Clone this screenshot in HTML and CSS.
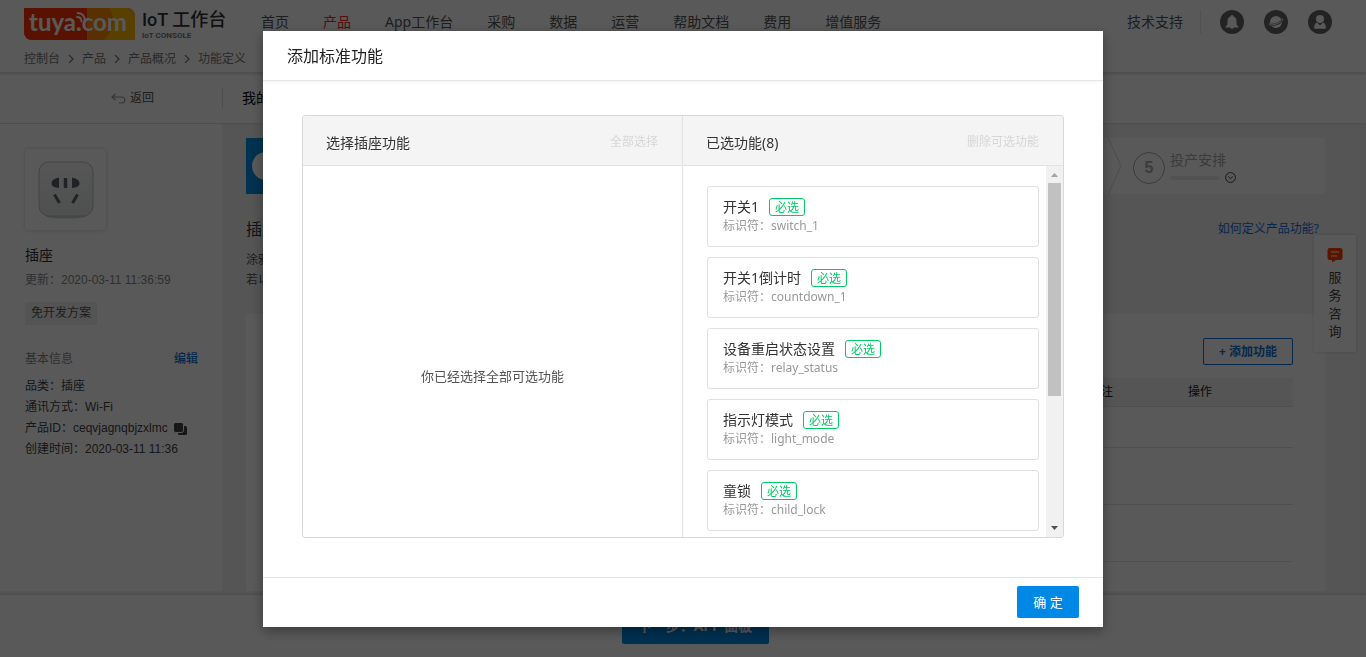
FILE: index.html
```html
<!DOCTYPE html>
<html lang="zh-CN">
<head>
<meta charset="utf-8">
<title>IoT 工作台</title>
<link rel="stylesheet" href="styles.css">
</head>
<body>
<div class="app">
  <header class="topbar">
    <div class="topbar-row">
      <a class="brand" href="#">
        <svg class="brand-logo" width="111" height="32" viewBox="0 0 111 32" role="img" aria-label="tuya.com">
          <defs><clipPath id="plate"><path d="M0 0H102Q111 0 111 9V32H9Q0 32 0 23Z"/></clipPath></defs>
          <g clip-path="url(#plate)">
            <rect width="111" height="32" fill="#ff3600"/>
            <rect x="63" width="48" height="32" fill="#ffb400"/>
            <circle cx="66" cy="13" r="23" fill="#ff8a00"/>
            <rect width="63" height="32" fill="#ff3600"/>
          </g>
          <text class="brand-word" x="5" y="23">tuya.com</text>
          <path d="M53 9Q57.500 9 57.500 13.500M53.500 5Q61 5.500 61 13" fill="none" stroke="#fff" stroke-width="1.800" stroke-linecap="round"/>
        </svg>
        <span class="brand-text"><strong>IoT 工作台</strong><small>IoT CONSOLE</small></span>
      </a>
      <nav class="nav">
        <a href="#">首页</a><a class="active" href="#">产品</a><a href="#">App工作台</a><a href="#">采购</a><a href="#">数据</a><a href="#">运营</a><a href="#">帮助文档</a><a href="#">费用</a><a href="#">增值服务</a>
      </nav>
      <div class="tools">
        <a class="support" href="#">技术支持</a>
        <button class="round" aria-label="通知"><svg width="24" height="24" viewBox="0 0 24 24"><circle cx="12" cy="12" r="12" fill="#666"/><path d="M12 5q1 0 1.200 1.200q3.300.8 3.300 5.200v3.200l2 2.200v.7h-4.700q-.4 1.200-1.800 1.200t-1.800-1.200H5.500v-.7l2-2.200v-3.200q0-4.400 3.300-5.200Q11 5 12 5z" fill="#fff"/></svg></button>
        <button class="round" aria-label="语言"><svg width="24" height="24" viewBox="0 0 24 24"><circle cx="12" cy="12" r="12" fill="#666"/><circle cx="12" cy="12" r="6" fill="#fff"/><path d="M5.500 13Q4 15.500 8 15Q14 14.500 17.500 11Q19.500 9 18 8.500" fill="none" stroke="#666" stroke-width="2.400"/><path d="M6.500 12.500Q3.500 15.500 8 15Q13 14.500 17.500 11.200Q20 9 17.500 9.300" fill="none" stroke="#fff" stroke-width="1"/></svg></button>
        <button class="round" aria-label="账户"><svg width="24" height="24" viewBox="0 0 24 24"><circle cx="12" cy="12" r="12" fill="#666"/><circle cx="12" cy="9" r="4" fill="#fff"/><path d="M6 19v-2.500q0-3.500 3.200-4.200L12 15.200l2.800-2.900q3.200.7 3.200 4.200V19z" fill="#fff" stroke="#666" stroke-width=".6"/></svg></button>
      </div>
    </div>
    <nav class="crumbs" aria-label="路径">
      <a href="#">控制台</a>
      <svg width="6" height="8" viewBox="0 0 6 8"><path d="M1 0l4 4-4 4"/></svg>
      <a href="#">产品</a>
      <svg width="6" height="8" viewBox="0 0 6 8"><path d="M1 0l4 4-4 4"/></svg>
      <a href="#">产品概况</a>
      <svg width="6" height="8" viewBox="0 0 6 8"><path d="M1 0l4 4-4 4"/></svg>
      <span>功能定义</span>
    </nav>
  </header>

  <div class="subbar">
    <a class="back" href="#"><svg width="15" height="11" viewBox="0 0 15 11"><path d="M4.500 1L1 4l3.500 3M1.500 4h9q3.300 0 3.300 3t-3.300 3H8" fill="none" stroke="#999" stroke-width="1.200"/></svg>返回</a>
    <h1 class="product-name">我的产品</h1>
  </div>

  <div class="content">
    <aside class="side">
      <div class="thumb">
        <svg width="56" height="58" viewBox="0 0 56 58">
          <defs><linearGradient id="shell" x1="0" y1="0" x2="0" y2="1"><stop offset="0" stop-color="#f8f8f8"/><stop offset="1" stop-color="#e2e4e5"/></linearGradient></defs>
          <ellipse cx="28" cy="55.500" rx="20" ry="2" fill="#d0d0d0"/>
          <rect x="1" y="1" width="54" height="54" rx="10" fill="url(#shell)" stroke="#bcc2c6"/>
          <path d="M13.500 22q0-2.500 3-4t4.500-1.500V27q-1.500 0-4.500-1T13.500 22zM41.500 22q0-2.500-3-4T34 16.500V27q1.500 0 4.500-1t3-4z" fill="#59666d"/>
          <path d="M27.500 17v10" stroke="#59666d" stroke-width="3.500"/>
          <path d="M16.500 33.500l5 8.500M39.500 33.500l-5 8.500" stroke="#59666d" stroke-width="3"/>
        </svg>
      </div>
      <h2 class="side-name">插座</h2>
      <p class="side-date">更新：2020-03-11 11:36:59</p>
      <span class="plan">免开发方案</span>
      <div class="side-head"><span>基本信息</span><a href="#">编辑</a></div>
      <ul class="facts">
        <li>品类：插座</li>
        <li>通讯方式：Wi-Fi</li>
        <li>产品ID：ceqvjagnqbjzxlmc<button class="copy" aria-label="复制"><svg width="13" height="12" viewBox="0 0 13 12"><rect x="4" y="3" width="9" height="9" rx="1.500" fill="#444"/><rect x="-.5" y="-.5" width="10" height="10" rx="2" fill="#444" stroke="#fff"/></svg></button></li>
        <li>创建时间：2020-03-11 11:36</li>
      </ul>
    </aside>

    <main class="main">
      <div class="steps">
        <div class="step-first"><span class="step-dot"></span></div>
        <svg class="step-arrow" width="14" height="56" viewBox="0 0 14 56"><path d="M0 0L13 28L0 56" fill="none" stroke="#e6e6e6" stroke-width="1.500"/></svg>
        <div class="step-last">
          <span class="step-num">5</span>
          <div>
            <div class="step-title">投产安排</div>
            <div class="step-track"><span class="bar"></span><svg width="11" height="11" viewBox="0 0 11 11"><circle cx="5.500" cy="5.500" r="4.900" fill="none" stroke="#444"/><path d="M3.200 4.500l2.300 2.200 2.300-2.200" fill="none" stroke="#444"/></svg></div>
          </div>
        </div>
      </div>
      <div class="intro">
        <h2>插座</h2>
        <a href="#">如何定义产品功能?</a>
      </div>
      <p class="desc">涂鸦</p>
      <p class="desc">若以</p>
      <section class="panel">
        <div class="panel-tools"><button class="add">+ 添加功能</button></div>
        <table class="grid">
          <thead><tr><th class="note">备注</th><th>操作</th></tr></thead>
          <tbody>
            <tr class="short"><td></td><td></td></tr>
            <tr><td></td><td></td></tr>
            <tr><td></td><td></td></tr>
          </tbody>
        </table>
      </section>
    </main>
  </div>

  <footer class="foot"><button class="next">下一步：APP 面板</button></footer>

  <button class="service">
    <svg width="16" height="16" viewBox="0 0 16 16"><path d="M3 1h10q2.500 0 2.500 2.500v7q0 2.500-2.500 2.500H9l-4 2.500V13H3Q.5 13 .5 10.500v-7Q.5 1 3 1z" fill="#ff3c00"/><path d="M4 5h8M4 9h6" stroke="#fff" stroke-width="1.200"/></svg>
    <span>服</span><span>务</span><span>咨</span><span>询</span>
  </button>
</div>

<div class="mask">
  <div class="modal" role="dialog" aria-labelledby="dialog-title">
    <h2 class="modal-head" id="dialog-title">添加标准功能</h2>
    <div class="modal-body">
      <div class="transfer">
        <section class="pane">
          <div class="pane-head"><h3>选择插座功能</h3><button class="pane-action" disabled>全部选择</button></div>
          <div class="empty">你已经选择全部可选功能</div>
        </section>
        <section class="pane">
          <div class="pane-head"><h3>已选功能(8)</h3><button class="pane-action" disabled>删除可选功能</button></div>
          <div class="scroller">
            <ul class="list">
              <li><div class="fn"><span>开关1</span><em>必选</em></div><p>标识符：switch_1</p></li>
              <li><div class="fn"><span>开关1倒计时</span><em>必选</em></div><p>标识符：countdown_1</p></li>
              <li><div class="fn"><span>设备重启状态设置</span><em>必选</em></div><p>标识符：relay_status</p></li>
              <li><div class="fn"><span>指示灯模式</span><em>必选</em></div><p>标识符：light_mode</p></li>
              <li><div class="fn"><span>童锁</span><em>必选</em></div><p>标识符：child_lock</p></li>
            </ul>
            <div class="track">
              <svg width="17" height="17" viewBox="0 0 17 17"><path d="M5 11h7L8.500 7z" fill="#a3a3a3"/></svg>
              <div class="grip"></div>
              <svg width="17" height="17" viewBox="0 0 17 17"><path d="M5 6h7L8.500 10z" fill="#505050"/></svg>
            </div>
          </div>
        </section>
      </div>
    </div>
    <div class="modal-foot"><button class="ok">确 定</button></div>
  </div>
</div>
</body>
</html>
```
FILE: styles.css
```css
* { box-sizing: border-box; margin: 0; padding: 0; }
body {
  font-family: "Noto Sans", "Noto Sans CJK SC", sans-serif;
  font-size: 14px;
  line-height: 20px;
  color: #333;
}
a { color: inherit; text-decoration: none; }
button { font: inherit; color: inherit; border: 0; background: none; }
ul { list-style: none; }
svg { display: block; flex: none; }
h1, h2, h3 { font-weight: 400; }

.app {
  position: relative;
  display: flex;
  flex-direction: column;
  height: 100vh;
  overflow: hidden;
  background: #f3f3f3;
}

.topbar {
  flex: none;
  height: 72px;
  padding: 8px 34px 0 24px;
  background: #fff;
  box-shadow: 0 1px 3px rgba(0, 0, 0, .12);
}
.topbar-row { display: flex; height: 32px; }
.brand { display: flex; gap: 7px; width: 237px; }
.brand-logo { overflow: visible; }
.brand-word { font: 700 24px Lato, sans-serif; fill: #fff; }
.brand-text { display: flex; flex-direction: column; }
.brand-text strong { font-family: Roboto, "Noto Sans CJK SC", sans-serif; font-size: 18px; font-weight: 500; line-height: 23px; }
.brand-text small { font: 700 8px/9px Roboto, sans-serif; color: #777; }
.nav { display: flex; gap: 34px; padding-top: 4px; color: #555; white-space: nowrap; }
.nav .active { color: #f02323; }
.tools { display: flex; gap: 20px; margin-left: auto; padding-top: 2px; }
.support { height: 24px; padding: 2px 17px 0 0; color: #555; border-right: 1px solid #e6e6e6; margin-right: -1px; }
.round { width: 24px; height: 24px; }
.crumbs {
  display: flex;
  align-items: center;
  gap: 8px;
  margin-top: 9px;
  font-size: 12px;
  color: #777;
}
.crumbs svg path { fill: none; stroke: #777; stroke-width: 1.2; }

.subbar {
  display: flex;
  align-items: center;
  flex: none;
  height: 48px;
  margin-top: 3px;
  padding-bottom: 2px;
  background: #fff;
  box-shadow: 0 1px 2px rgba(0, 0, 0, .1);
}
.back {
  display: flex;
  align-items: center;
  gap: 4px;
  width: 223px;
  padding-left: 111px;
  font-size: 12px;
  color: #555;
  border-right: 1px solid #ddd;
}
.product-name { padding-left: 19px; font-size: 14px; color: #000; }

.content { display: flex; flex: 1; min-height: 0; }
.side {
  width: 222px;
  padding: 25px 24px 0 25px;
  background: #fff;
  font-family: "Liberation Sans", "Noto Sans CJK SC", sans-serif;
  font-size: 12px;
  margin-top: 1px;
}
.thumb {
  display: grid;
  place-items: center;
  width: 81px;
  height: 81px;
  border-radius: 4px;
  box-shadow: 0 0 4px rgba(0, 0, 0, .2);
}
.side-name { margin-top: 15px; font-size: 14px; line-height: 20px; }
.side-date { margin-top: 5px; line-height: 20px; color: #888; }
.plan {
  display: inline-block;
  margin-top: 12px;
  padding: 0 6px;
  line-height: 23px;
  color: #555;
  background: #f0f0f0;
  border-radius: 2px;
}
.side-head { display: flex; justify-content: space-between; margin-top: 24px; color: #888; }
.side-head a { color: #0f6fd6; font-weight: 500; }
.facts { margin-top: 7px; line-height: 21px; color: #444; }
.facts li { display: flex; align-items: center; gap: 6px; height: 21px; }
.copy { width: 13px; height: 12px; }

.main { display: flex; flex-direction: column; flex: 1; padding: 15px 41px 0 24px; }
.steps { display: flex; flex: none; height: 56px; background: #fff; }
.step-first { width: 200px; padding: 14px 6px; background: #0090e7; }
.step-dot { display: block; width: 28px; height: 28px; border-radius: 50%; background: #fff; }
.step-arrow { margin-left: auto; }
.step-last { display: flex; gap: 5px; width: 203px; padding: 14px 0 0 11px; color: #aaa; }
.step-num {
  width: 32px;
  height: 32px;
  border: 1px solid #aaa;
  border-radius: 50%;
  font: 700 16px/30px "Liberation Sans", sans-serif;
  text-align: center;
}
.step-title { line-height: 16px; }
.step-track { display: flex; align-items: center; gap: 5px; margin-top: 4px; }
.bar { width: 50px; height: 4px; border-radius: 2px; background: #eaeaea; }
.intro { display: flex; justify-content: space-between; margin: 24px 6px 10px 0; line-height: 22px; }
.intro h2 { font-size: 16px; }
.intro a { font-size: 12px; color: #0f6fd6; }
.desc { font-size: 12px; line-height: 20px; color: #555; }
.panel { flex: 1; min-height: 0; margin-top: 24px; padding: 24px 32px 0; overflow: hidden; background: #fff; }
.panel-tools { display: flex; justify-content: flex-end; }
.add {
  width: 90px;
  height: 27px;
  border: 1px solid #0f6fd6;
  border-radius: 2px;
  font-size: 12px;
  font-weight: 700;
  color: #0f6fd6;
}
.grid { width: 100%; margin-top: 13px; border-collapse: collapse; font-size: 12px; table-layout: fixed; }
.grid th { height: 28px; font-weight: 400; text-align: left; background: #f2f2f2; color: #222; }
.grid th:last-child { width: 105px; }
.grid .note { text-align: right; padding-right: 75px; }
.grid tr { height: 57px; border-bottom: 1px solid #e2e2e2; }
.grid thead tr { height: 28px; }
.grid .short { height: 41px; }

.foot {
  display: flex;
  justify-content: center;
  align-items: flex-start;
  flex: none;
  height: 62px;
  margin-top: 4px;
  padding: 13px 0 0 24px;
  background: #fff;
  box-shadow: 0 -1px 3px rgba(0, 0, 0, .12);
}
.next {
  width: 147px;
  height: 36px;
  border-radius: 2px;
  background: #0088e6;
  color: #fff;
  font-weight: 700;
}
.service {
  position: absolute;
  top: 235px;
  right: 10px;
  display: flex;
  flex-direction: column;
  align-items: center;
  width: 42px;
  padding: 12px 0;
  background: #fff;
  box-shadow: 0 0 4px rgba(0, 0, 0, .15);
  font-size: 13px;
  line-height: 18px;
  color: #444;
}
.service svg { margin-bottom: 5px; }

.mask {
  position: fixed;
  inset: 0;
  display: flex;
  justify-content: center;
  align-items: center;
  padding-top: 1px;
  background: rgba(0, 0, 0, .65);
}
.modal { width: 840px; background: #fff; box-shadow: 0 4px 12px rgba(0, 0, 0, .35); }
.modal-head {
  padding: 14px 24px 12px;
  font-size: 16px;
  line-height: 23px;
  border-bottom: 1px solid #e6e6e6;
  box-shadow: 0 1px 3px rgba(0, 0, 0, .06);
  color: #222;
}
.modal-body { padding: 34px 39px 39px; }
.transfer {
  display: grid;
  grid-template-columns: 1fr 1fr;
  border: 1px solid #d8d8d8;
  border-radius: 3px;
  overflow: hidden;
}
.pane { display: flex; flex-direction: column; }
.pane:first-child { border-right: 1px solid #e2e2e2; }
.pane-head {
  display: flex;
  justify-content: space-between;
  padding: 17px 24px 12px 23px;
  background: #f4f4f4;
  border-bottom: 1px solid #e2e2e2;
}
.pane-head h3 { font-size: 14px; line-height: 20px; }
.pane-action { font-size: 12px; line-height: 18px; height: 18px; color: #d6d6d6; }
.empty {
  display: flex;
  flex: 1;
  justify-content: center;
  align-items: center;
  padding-top: 48px;
  font-size: 13px;
  color: #555;
}
.scroller { display: flex; height: 371px; }
.list { flex: 1; display: flex; flex-direction: column; gap: 10px; padding: 20px 7px 0 24px; overflow: hidden; }
.list li { flex: none; height: 61px; padding: 10px 15px; border: 1px solid #e0e0e0; border-radius: 3px; }
.fn { display: flex; align-items: center; gap: 10px; line-height: 20px; }
.fn em {
  height: 18px;
  padding: 0 5px;
  border: 1px solid #0c6;
  border-radius: 3px;
  font-size: 12px;
  line-height: 17px;
  font-style: normal;
  color: #0c6;
}
.list p { font-size: 12px; line-height: 18px; color: #999; }
.track { display: flex; flex-direction: column; align-items: center; width: 17px; background: #f1f1f1; }
.grip { width: 13px; height: 213px; margin-bottom: auto; background: #c1c1c1; }
.modal-foot { display: flex; justify-content: flex-end; padding: 8px 24px 9px; border-top: 1px solid #e6e6e6; }
.ok { width: 62px; height: 32px; border-radius: 2px; background: #0088e6; color: #fff; font-size: 13px; }
```
